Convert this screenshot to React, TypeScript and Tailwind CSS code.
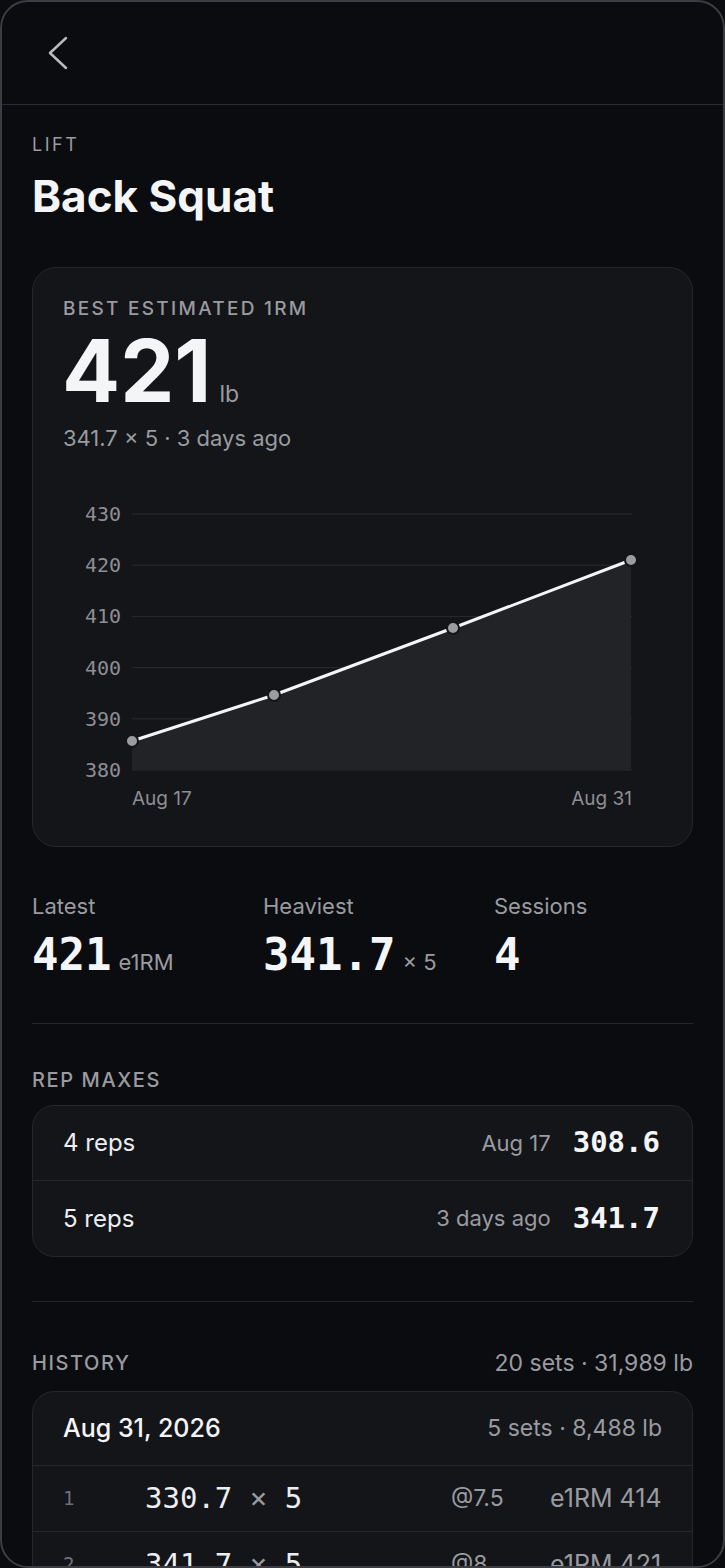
const grid = [430, 420, 410, 400, 390, 380];
const points = [
  { x: 68, y: 255 },
  { x: 210, y: 209 },
  { x: 389, y: 142 },
  { x: 567, y: 74 },
];

const mono = '"DejaVu Sans Mono", monospace';

function Chart() {
  const line = points.map((p) => `${p.x},${p.y}`).join(" ");
  const area = `M68,284 L${line.replace(/ /g, " L")} L567,284 Z`;
  return (
    <svg viewBox="0 0 597 330" className="mt-[33px] block h-[330px] w-full">
      {grid.map((v, i) => {
        const y = 28 + i * 51.2;
        return (
          <g key={v}>
            <line x1={68} x2={568} y1={y} y2={y} stroke="#2a2b30" strokeWidth={1} />
            <text x={57} y={y + 7} textAnchor="end" fill="#8d8e93" fontSize={20} fontFamily={mono}>
              {v}
            </text>
          </g>
        );
      })}
      <path d={area} fill="#222327" />
      <polyline points={line} fill="none" stroke="#f4f5f7" strokeWidth={3} strokeLinejoin="round" />
      {points.map((p) => (
        <circle key={p.x} cx={p.x} cy={p.y} r={6} fill="#9a9ca0" stroke="#141519" strokeWidth={2} />
      ))}
      <text x={68} y={319} fill="#8d8e93" fontSize={19} fontFamily="Inter, sans-serif">
        Aug 17
      </text>
      <text x={568} y={319} textAnchor="end" fill="#8d8e93" fontSize={19} fontFamily="Inter, sans-serif">
        Aug 31
      </text>
    </svg>
  );
}

function Stat({ label, value, unit }: { label: string; value: string; unit?: string }) {
  return (
    <div>
      <div className="text-[22px] leading-[30px] text-[#9a9ba0]">{label}</div>
      <div className="mt-[10px] flex items-baseline">
        <span className="font-['DejaVu_Sans_Mono',monospace] text-[44px] leading-[48px] font-bold text-[#f4f5f7]">
          {value}
        </span>
        {unit && <span className="ml-[7px] text-[22px] text-[#9a9ba0]">{unit}</span>}
      </div>
    </div>
  );
}

function RepRow({ reps, when, weight, last }: { reps: string; when: string; weight: string; last?: boolean }) {
  return (
    <div className={`flex h-[75px] items-center pr-[32px] pl-[30px] ${last ? "" : "border-b border-[#26272c]"}`}>
      <span className="text-[24px] text-[#eceef1]">{reps}</span>
      <span className="ml-auto text-[22px] text-[#9a9ba0]">{when}</span>
      <span className="ml-[22px] font-['DejaVu_Sans_Mono',monospace] text-[29px] font-bold text-[#f4f5f7]">
        {weight}
      </span>
    </div>
  );
}

function SetRow({ n, weight, reps, rpe, e1rm }: { n: string; weight: string; reps: string; rpe: string; e1rm: string }) {
  return (
    <div className="flex h-[66px] items-center border-t border-[#26272c] pr-[31px] pl-[30px]">
      <span className="w-[82px] font-['DejaVu_Sans_Mono',monospace] text-[19px] text-[#6f7075]">{n}</span>
      <span className="flex-1 whitespace-pre font-['DejaVu_Sans_Mono',monospace] text-[29px] text-[#eceef1]">
        {weight} <span className="text-[#9a9ba0]">×</span> {reps}
      </span>
      <span className="w-[99px] text-[23px] text-[#9a9ba0]">{rpe}</span>
      <span className="w-[111px] whitespace-nowrap text-right text-[25px] text-[#9a9ba0]">{e1rm}</span>
    </div>
  );
}

export default function App() {
  return (
    <div className="min-h-screen bg-[#0b0c0f] font-['Inter','Liberation_Sans',sans-serif]">
      <div className="h-[1568px] overflow-hidden rounded-[28px] border-2 border-[#3c3d42] bg-[#0b0c0f]">
        <header className="flex h-[103px] items-center border-b border-[#2a2b30] pl-[45px]">
          <svg width="22" height="34" viewBox="0 0 22 34" fill="none">
            <path d="M19 2 L3 17 L19 32" stroke="#b9babe" strokeWidth={2.5} strokeLinecap="round" strokeLinejoin="round" />
          </svg>
        </header>

        <main className="px-[30px]">
          <div className="pt-[28px] text-[18px] leading-[24px] tracking-[0.14em] text-[#9a9ba0]">LIFT</div>
          <h1 className="mt-[13px] text-[44px] leading-[52px] font-bold text-[#f4f5f7]">Back Squat</h1>

          <section className="mt-[45px] rounded-[24px] border border-[#26272c] bg-[#141519] px-[30px] pt-[29px] pb-[30px]">
            <div className="text-[19px] leading-[24px] font-medium tracking-[0.12em] text-[#9a9ba0]">
              BEST ESTIMATED 1RM
            </div>
            <div className="mt-[7px] flex items-baseline">
              <span className="-ml-[1px] text-[86px] leading-[86px] font-bold text-[#f4f5f7]">421</span>
              <span className="ml-[8px] text-[23px] text-[#9a9ba0]">lb</span>
            </div>
            <div className="mt-[9px] text-[22px] leading-[30px] text-[#9a9ba0]">341.7 × 5 · 3 days ago</div>
            <Chart />
          </section>

          <div className="mt-[44px] grid grid-cols-3 gap-x-8">
            <Stat label="Latest" value="421" unit="e1RM" />
            <Stat label="Heaviest" value="341.7" unit="× 5" />
            <Stat label="Sessions" value="4" />
          </div>

          <div className="mt-[44px] border-t border-[#26272c]" />

          <div className="mt-[44px] text-[20px] leading-[24px] font-medium tracking-[0.08em] text-[#9a9ba0]">
            REP MAXES
          </div>
          <div className="mt-[13px] overflow-hidden rounded-[22px] border border-[#26272c] bg-[#141519]">
            <RepRow reps="4 reps" when="Aug 17" weight="308.6" />
            <RepRow reps="5 reps" when="3 days ago" weight="341.7" last />
          </div>

          <div className="mt-[44px] border-t border-[#26272c]" />

          <div className="mt-[46px] flex h-[30px] items-center justify-between">
            <span className="text-[20px] font-medium tracking-[0.08em] text-[#9a9ba0]">HISTORY</span>
            <span className="text-[23px] leading-[30px] text-[#9a9ba0]">20 sets · 31,989 lb</span>
          </div>
          <div className="mt-[13px] overflow-hidden rounded-[22px] border border-[#26272c] bg-[#141519]">
            <div className="flex h-[73px] items-center justify-between px-[30px]">
              <span className="text-[25px] font-medium text-[#f4f5f7]">Aug 31, 2026</span>
              <span className="text-[23px] text-[#9a9ba0]">5 sets · 8,488 lb</span>
            </div>
            <SetRow n="1" weight="330.7" reps="5" rpe="@7.5" e1rm="e1RM 414" />
            <SetRow n="2" weight="341.7" reps="5" rpe="@8" e1rm="e1RM 421" />
            <SetRow n="3" weight="341.7" reps="5" rpe="@8.5" e1rm="e1RM 421" />
          </div>
        </main>
      </div>
    </div>
  );
}
